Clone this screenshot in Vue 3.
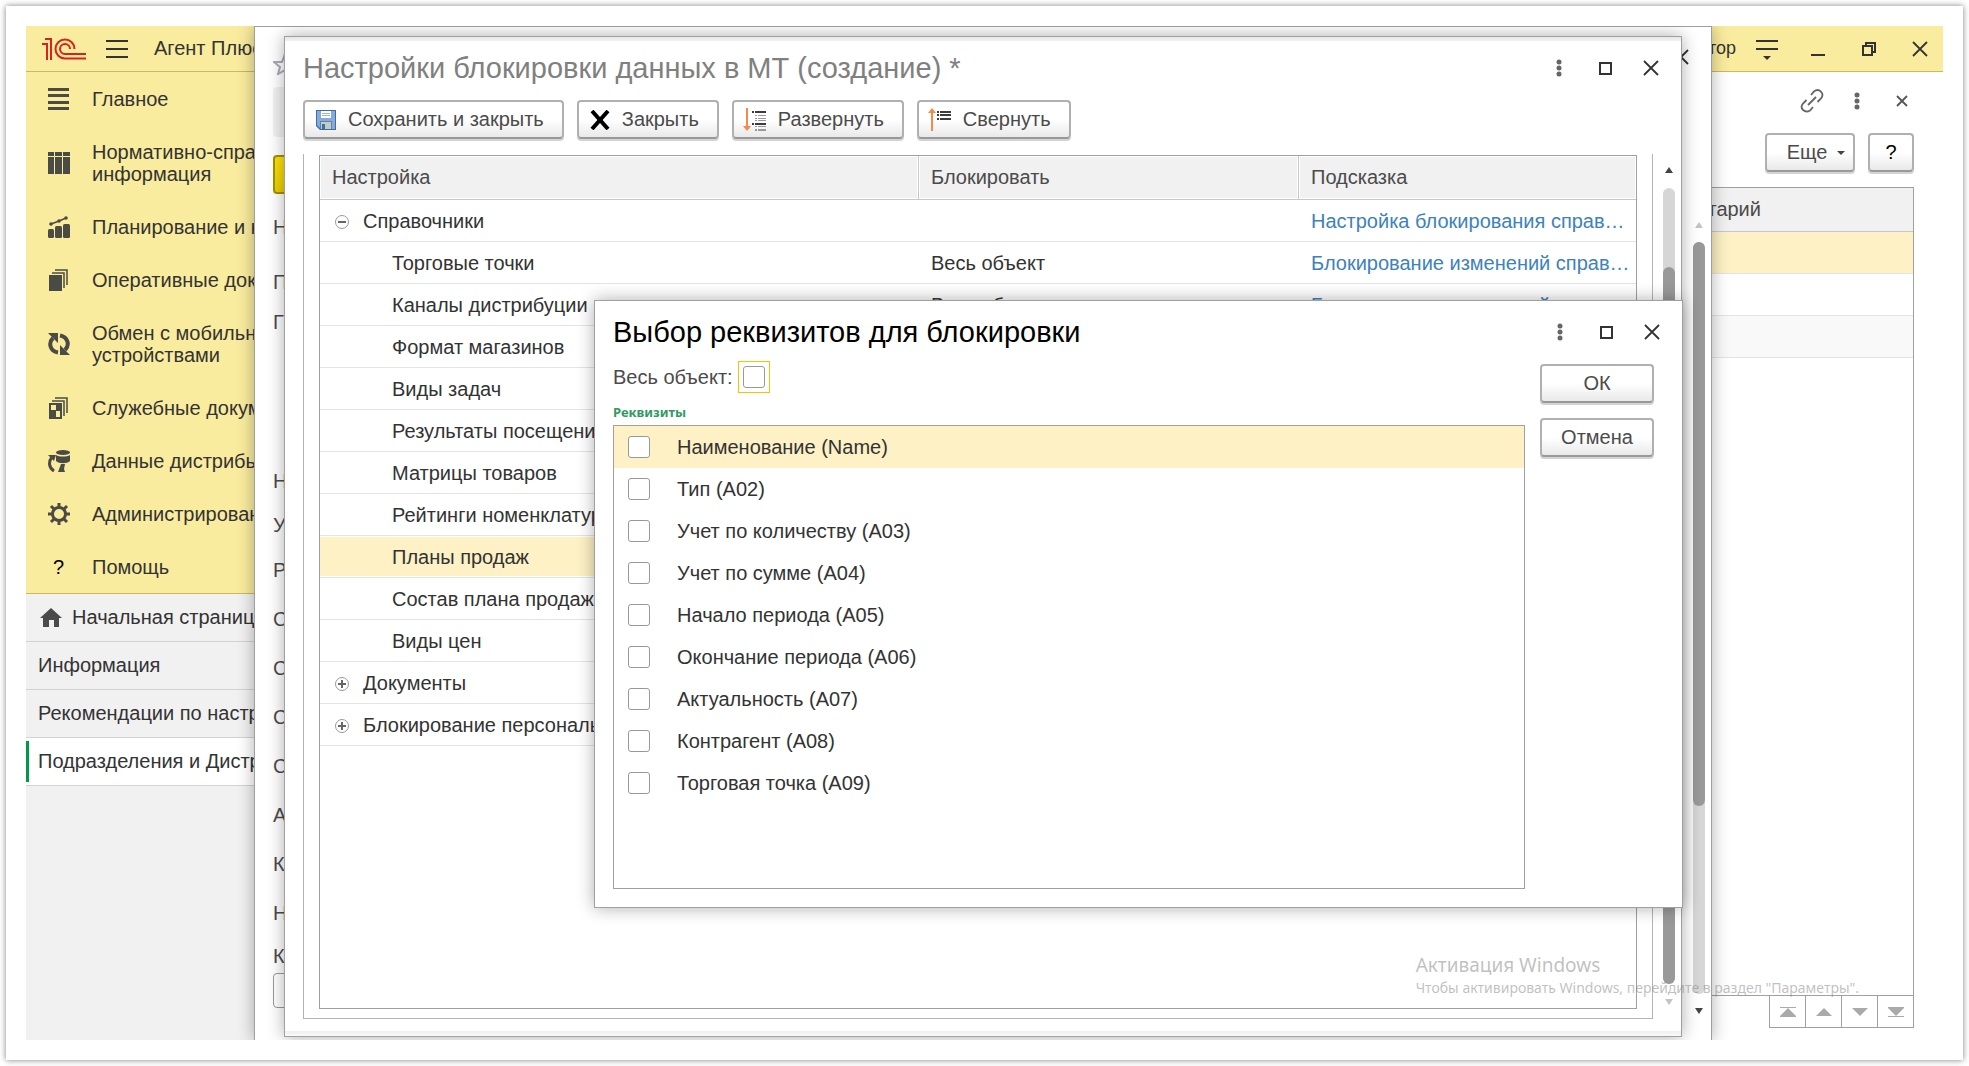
<script setup>
import { ref } from 'vue'

const sections = [
  { icon: 'lines', lines: ['Главное'] },
  { icon: 'columns', lines: ['Нормативно-справочная', 'информация'] },
  { icon: 'chart', lines: ['Планирование и контроль'] },
  { icon: 'docs', lines: ['Оперативные документы'] },
  { icon: 'sync', lines: ['Обмен с мобильными', 'устройствами'] },
  { icon: 'service', lines: ['Служебные документы'] },
  { icon: 'db', lines: ['Данные дистрибьюторов'] },
  { icon: 'gear', lines: ['Администрирование'] },
  { icon: 'help', lines: ['Помощь'] },
]

const openPages = [
  { text: 'Начальная страница', home: true },
  { text: 'Информация' },
  { text: 'Рекомендации по настройке' },
  { text: 'Подразделения и Дистрибьюторы', active: true },
]

const formLabels = ['Н', 'П', 'Г', 'Н', 'У', 'Р', 'С', 'С', 'С', 'С', 'А', 'К', 'Н', 'К']

const rows = [
  { name: 'Справочники', node: 'minus', hint: 'Настройка блокирования справ…' },
  { name: 'Торговые точки', lock: 'Весь объект', hint: 'Блокирование изменений справ…' },
  { name: 'Каналы дистрибуции', lock: 'Весь объект', hint: 'Блокирование изменений справ…' },
  { name: 'Формат магазинов' },
  { name: 'Виды задач' },
  { name: 'Результаты посещений' },
  { name: 'Матрицы товаров' },
  { name: 'Рейтинги номенклатуры' },
  { name: 'Планы продаж', selected: true },
  { name: 'Состав плана продаж' },
  { name: 'Виды цен' },
  { name: 'Документы', node: 'plus' },
  { name: 'Блокирование персональных данных', node: 'plus' },
]

const wholeObject = ref(false)
const attributes = ref([
  'Наименование (Name)',
  'Тип (A02)',
  'Учет по количеству (A03)',
  'Учет по сумме (A04)',
  'Начало периода (A05)',
  'Окончание периода (A06)',
  'Актуальность (A07)',
  'Контрагент (A08)',
  'Торговая точка (A09)',
].map((label) => ({ label, checked: false })))
</script>

<template>
  <div class="sheet">
    <div class="screen">
      <header class="topbar">
        <svg class="logo" width="44" height="24" viewBox="0 0 44 24" fill="none" stroke="#d9211e" stroke-width="2">
          <path d="M0 7h5v16M3 2h6v21" />
          <path d="M32.500 12a9.500 9.500 0 1 0 -9.500 9.500H44" />
          <path d="M28 12a5 5 0 1 0 -5 5H44" />
        </svg>
        <button class="bare" aria-label="Меню">
          <svg width="22" height="20" stroke="#333" stroke-width="2"><path d="M0 2h22M0 10h22M0 18h22" /></svg>
        </button>
        <span class="app-name">Агент Плюс</span>
        <span class="user">Администратор</span>
        <div class="controls">
          <button class="bare" aria-label="Сервис">
            <svg width="22" height="22" stroke="#333" stroke-width="2"><path d="M0 3h22M0 11h22" /><path d="M7 18h8l-4 4z" fill="#333" stroke="none" /></svg>
          </button>
          <button class="bare" aria-label="Свернуть окно">
            <svg width="14" height="22"><path d="M0 16h14v2H0z" fill="#333" /></svg>
          </button>
          <button class="bare" aria-label="Восстановить окно">
            <svg width="14" height="16" fill="none" stroke="#333" stroke-width="2"><path d="M1 5h9v9H1zM4 5V2h9v9h-3" /></svg>
          </button>
          <button class="bare" aria-label="Закрыть окно">
            <svg width="16" height="16" stroke="#333" stroke-width="1.800"><path d="M1 1l14 14M15 1L1 15" /></svg>
          </button>
        </div>
      </header>

      <div class="body">
        <aside class="sidebar">
          <nav class="sections">
            <a v-for="s in sections" :key="s.icon" href="#" class="section">
              <span class="section-icon">
                <svg v-if="s.icon === 'lines'" width="22" height="22" fill="#4b4b46"><path d="M0 0h21v3H0zM0 6h21v3H0zM0 13h21v3H0zM0 19h21v3H0z" /></svg>
                <svg v-else-if="s.icon === 'columns'" width="22" height="22" fill="#4b4b46"><path d="M0 0h6v4H0zM7 0h7v4H7zM15 0h7v4h-7zM0 5h6v17H0zM7 5h7v17H7zM15 5h7v17h-7z" /></svg>
                <svg v-else-if="s.icon === 'chart'" width="22" height="22" fill="#4b4b46"><rect y="13" width="6" height="9" rx="1.500" /><rect x="7" y="10" width="7" height="12" rx="1.500" /><rect x="15" y="8" width="7" height="14" rx="1.500" /><path d="M3 8l8-3 7-3" stroke="#4b4b46" stroke-width="1.500" fill="none" /><circle cx="3" cy="8" r="1.800" /><circle cx="11" cy="5" r="1.800" /><circle cx="18" cy="2" r="1.800" /></svg>
                <svg v-else-if="s.icon === 'docs'" width="22" height="22" fill="#4b4b46"><path d="M1 6h13v16H1z" /><path d="M4 4h12v15M7 1h12v15" fill="none" stroke="#4b4b46" stroke-width="1.500" /></svg>
                <svg v-else-if="s.icon === 'sync'" width="22" height="22" fill="none" stroke="#4b4b46" stroke-width="4"><path d="M10 19.500C2 18 0 10 5 5M12 2.500c8 1.500 10 9.500 5 14.500" /><path d="M0 0h10v10zM22 22H12V12z" fill="#4b4b46" stroke="none" /></svg>
                <svg v-else-if="s.icon === 'service'" width="22" height="22" fill="#4b4b46"><path d="M1 6h13v16H1zM3 8v5h5V8zM8 14v6h4v-6z" fill-rule="evenodd" /><path d="M4 4h12v15M7 1h12v15" fill="none" stroke="#4b4b46" stroke-width="1.500" /></svg>
                <svg v-else-if="s.icon === 'db'" width="24" height="22" fill="#4b4b46"><ellipse cx="15" cy="2.500" rx="7" ry="2.500" /><path d="M8 5c3 2 11 2 14 0v6c-3 3-11 3-14 0z" /><path d="M4 7C0 12 1 18 6 21" fill="none" stroke="#4b4b46" stroke-width="3" /><path d="M0 5h8l-2 6zM13 14h4l-1 5 1 3h-7z" /></svg>
                <svg v-else-if="s.icon === 'gear'" width="22" height="22" fill="none" stroke="#4b4b46"><circle cx="11" cy="11" r="6.500" stroke-width="3" /><path d="M11 0v4M11 18v4M0 11h4M18 11h4M3 3l3 3M16 16l3 3M19 3l-3 3M6 16l-3 3" stroke-width="3" /></svg>
                <b v-else class="question">?</b>
              </span>
              <span><template v-for="(l, i) in s.lines" :key="l"><br v-if="i">{{ l }}</template></span>
            </a>
          </nav>
          <nav class="pages">
            <a v-for="p in openPages" :key="p.text" href="#" class="page-link" :class="{ active: p.active, home: p.home }">
              <svg v-if="p.home" width="22" height="19" fill="#4b4b4b"><path d="M11 0l11 10h-3v9h-5v-7H9v7H3v-9H0z" /></svg>
              {{ p.text }}
            </a>
          </nav>
        </aside>

        <main class="workspace">
          <div class="page-tools">
            <button class="bare" aria-label="Ссылка">
              <svg width="24" height="24" viewBox="0 0 24 24" fill="none" stroke="#666" stroke-width="1.800"><path d="M11 6l3-3.500c5-4 11 2 7 7l-3.500 3.500M13 18l-3 3.500c-5 3-11-2-7-7L6.500 11M8 16l8-8" /></svg>
            </button>
            <button class="bare" aria-label="Действия"><svg width="6" height="18" fill="#666"><circle cx="3" cy="3" r="2.500" /><circle cx="3" cy="9" r="2.500" /><circle cx="3" cy="15" r="2.500" /></svg></button>
            <button class="bare" aria-label="Закрыть страницу"><svg width="12" height="12" stroke="#555" stroke-width="1.800"><path d="M1 1l10 10M11 1L1 11" /></svg></button>
          </div>
          <div class="page-commands">
            <button class="btn more">Еще <svg width="8" height="4" fill="#444"><path d="M0 0h8L4 4z" /></svg></button>
            <button class="btn ask">?</button>
          </div>
          <table class="journal">
            <thead><tr><th>Комментарий</th></tr></thead>
            <tbody>
              <tr class="current"><td></td></tr>
              <tr><td></td></tr>
              <tr class="even"><td></td></tr>
              <tr class="rest"><td></td></tr>
            </tbody>
          </table>
          <div class="pager">
            <button aria-label="В начало"><svg width="16" height="10" fill="#aaa"><path d="M0 0h16v1H0zM8 1l8 8v1H0V9z" /></svg></button>
            <button aria-label="Вверх"><svg width="16" height="10" fill="#aaa"><path d="M8 1l8 8H0z" /></svg></button>
            <button aria-label="Вниз"><svg width="16" height="10" fill="#aaa"><path d="M0 1h16L8 9z" /></svg></button>
            <button aria-label="В конец"><svg width="16" height="10" fill="#aaa"><path d="M0 0h16v1L8 9 0 1zM0 9h16v1H0z" /></svg></button>
          </div>
        </main>
      </div>

      <section class="window card-window">
        <div class="card-form">
          <svg class="star" width="24" height="22" fill="none" stroke="#aab" stroke-width="2"><path d="M12 1l3 8h8l-6 5 2 7-7-4-7 4 2-7-6-5h8z" /></svg>
          <div class="tab"></div>
          <button class="yellow" aria-label="Записать"></button>
          <div class="labels"><span v-for="(l, i) in formLabels" :key="i">{{ l }}</span></div>
          <input class="field" type="text" aria-label="Комментарий">
        </div>
        <div class="card-side">
          <button class="bare" aria-label="Закрыть карточку"><svg width="16" height="16" stroke="#333" stroke-width="1.800"><path d="M1 1l14 14M15 1L1 15" /></svg></button>
          <div class="scroll">
            <svg width="8" height="6" fill="#c4c4c4"><path d="M4 0l4 6H0z" /></svg>
            <div class="track"><div class="thumb"></div></div>
            <svg width="8" height="6" fill="#444"><path d="M0 0h8L4 6z" /></svg>
          </div>
        </div>
      </section>

      <section class="window settings">
        <div class="window-head">
          <h1>Настройки блокировки данных в МТ (создание) *</h1>
          <div class="window-icons">
            <button class="bare" aria-label="Действия"><svg width="6" height="18" fill="#666"><circle cx="3" cy="3" r="2.500" /><circle cx="3" cy="9" r="2.500" /><circle cx="3" cy="15" r="2.500" /></svg></button>
            <button class="bare" aria-label="Развернуть окно"><svg width="13" height="13" fill="none" stroke="#333" stroke-width="2"><path d="M1 1h11v11H1z" /></svg></button>
            <button class="bare" aria-label="Закрыть окно"><svg width="16" height="16" stroke="#333" stroke-width="1.800"><path d="M1 1l14 14M15 1L1 15" /></svg></button>
          </div>
        </div>
        <div class="commands">
          <button class="btn">
            <svg width="20" height="20"><path d="M0 0h20v20H4l-4-4z" fill="#3f6da3" /><path d="M1 1h18v18H5l-4-4z" fill="#86abda" /><path d="M5 1h10v7H5z" fill="#fff" /><path d="M6 3h8v1H6zM6 5h8v1H6z" fill="#9bb6d8" /><path d="M4 11h12v8H4z" fill="#5d86a6" /><path d="M5 12h10v7H5z" fill="#c5cbc4" /><path d="M6 14h3v5H6z" fill="#3a6fa8" /></svg>
            Сохранить и закрыть
          </button>
          <button class="btn">
            <svg width="20" height="20" stroke="#000" stroke-width="4"><path d="M2 1l16 18M18 1L2 19" /></svg>
            Закрыть
          </button>
          <button class="btn tree">
            <svg width="23" height="23"><path d="M3 0h2v18h3l-4 5-4-5h3z" fill="#f58a4b" /><path d="M9 3h2v2H9zM12 3h11v2H12zM9 15h2v2H9zM12 15h11v2H12z" fill="#3c3c3c" /><path d="M12 7h2v1h-2zM15 7h8v1h-8zM12 10h2v1h-2zM15 10h8v1h-8zM12 12h2v1h-2zM15 12h8v1h-8zM12 18h2v1h-2zM15 18h8v1h-8zM12 21h2v2h-2zM15 21h8v2h-8z" fill="#999" /></svg>
            Развернуть
          </button>
          <button class="btn tree">
            <svg width="23" height="23"><path d="M3 23h2V5h3L4 0 0 5h3z" fill="#f58a4b" /><path d="M9 3h2v2H9zM12 3h11v2H12zM9 6h2v2H9zM12 6h11v2H12zM9 10h2v2H9zM12 10h11v2H12z" fill="#3c3c3c" /></svg>
            Свернуть
          </button>
        </div>
        <div class="settings-body">
          <div class="group">
            <div class="table-box">
              <table class="settings-table">
                <colgroup><col class="c-name"><col class="c-lock"><col></colgroup>
                <thead><tr><th>Настройка</th><th>Блокировать</th><th>Подсказка</th></tr></thead>
                <tbody>
                  <tr v-for="r in rows" :key="r.name" :class="{ selected: r.selected }">
                    <td>
                      <div class="name" :class="{ child: !r.node }">
                        <svg v-if="r.node" width="14" height="14" fill="none"><circle cx="7" cy="7" r="6.500" stroke="#999" /><path :d="r.node === 'plus' ? 'M3 7h8M7 3v8' : 'M3 7h8'" stroke="#666" stroke-width="2" /></svg>
                        {{ r.name }}
                      </div>
                    </td>
                    <td>{{ r.lock }}</td>
                    <td><a v-if="r.hint" href="#">{{ r.hint }}</a></td>
                  </tr>
                </tbody>
              </table>
            </div>
          </div>
          <div class="scroll">
            <svg width="8" height="6" fill="#444"><path d="M4 0l4 6H0z" /></svg>
            <div class="track"><div class="thumb"></div></div>
            <svg width="8" height="6" fill="#c4c4c4"><path d="M0 0h8L4 6z" /></svg>
          </div>
        </div>
      </section>

      <section class="window chooser">
        <div class="window-head">
          <h1>Выбор реквизитов для блокировки</h1>
          <div class="window-icons">
            <button class="bare" aria-label="Действия"><svg width="6" height="18" fill="#666"><circle cx="3" cy="3" r="2.500" /><circle cx="3" cy="9" r="2.500" /><circle cx="3" cy="15" r="2.500" /></svg></button>
            <button class="bare" aria-label="Развернуть окно"><svg width="13" height="13" fill="none" stroke="#333" stroke-width="2"><path d="M1 1h11v11H1z" /></svg></button>
            <button class="bare" aria-label="Закрыть окно"><svg width="16" height="16" stroke="#333" stroke-width="1.800"><path d="M1 1l14 14M15 1L1 15" /></svg></button>
          </div>
        </div>
        <div class="chooser-body">
          <div class="fields">
            <div class="whole">
              <label for="whole-object">Весь объект:</label>
              <span class="focus"><input id="whole-object" v-model="wholeObject" type="checkbox"></span>
            </div>
            <h2>Реквизиты</h2>
            <div class="list">
              <label v-for="(a, i) in attributes" :key="a.label" class="item" :class="{ selected: i === 0 }">
                <input v-model="a.checked" type="checkbox">{{ a.label }}
              </label>
            </div>
          </div>
          <div class="answers">
            <button class="btn">ОК</button>
            <button class="btn">Отмена</button>
          </div>
        </div>
      </section>

      <div class="watermark">
        <p class="wm-title">Активация Windows</p>
        <p>Чтобы активировать Windows, перейдите в раздел "Параметры".</p>
      </div>
    </div>
  </div>
</template>

<style>
html { background: #fff; }
</style>

<style scoped>
* { box-sizing: border-box; }
.sheet {
  display: flex;
  min-height: calc(100vh - 12px);
  margin: 6px;
  padding: 20px;
  background: #fff;
  box-shadow: 0 0 6px rgba(0, 0, 0, 0.5);
  font: 20px/23px "Liberation Sans", Arial, sans-serif;
  color: #333;
}
.screen {
  position: relative;
  display: flex;
  flex: 1;
  flex-direction: column;
  min-width: 0;
  overflow: hidden;
}
a { color: inherit; text-decoration: none; }
svg { display: block; flex: none; }
h1, h2, p { margin: 0; font-weight: normal; }
button, input { font: inherit; }
.bare { padding: 0; border: 0; background: none; }

.topbar {
  display: flex;
  align-items: center;
  height: 46px;
  padding: 0 11px 0 16px;
  background: #faec9e;
  border-bottom: 1px solid #c9b95f;
}
.topbar .logo { margin-right: 20px; }
.app-name { margin-left: 26px; }
.user { margin-left: auto; margin-right: 19px; font-size: 18px; }
.controls { display: flex; align-items: center; gap: 27px; }
.controls .bare, .page-tools .bare, .window-icons .bare {
  display: flex;
  justify-content: center;
  width: 24px;
}

.body { display: flex; flex: 1; }
.sidebar { width: 228px; overflow: hidden; background: #f1f1f1; white-space: nowrap; }
.sections { background: #faec9e; border-bottom: 1px solid #c9b95f; }
.section { display: flex; align-items: center; padding: 16px 0 15px 22px; line-height: 22px; }
.section-icon { display: flex; flex: none; width: 44px; }
.question { padding-left: 5px; font-weight: normal; color: #000; }
.page-link {
  display: flex;
  align-items: center;
  height: 48px;
  padding-left: 12px;
  border-bottom: 1px solid #d2d2d2;
}
.page-link.home { gap: 10px; padding-left: 14px; }
.page-link.active {
  background: linear-gradient(#00994a, #00994a) 0 3px / 3px 41px no-repeat #fff;
}

.workspace {
  display: flex;
  flex: 1;
  flex-direction: column;
  align-items: flex-end;
  padding: 17px 29px 12px 0;
}
.page-tools { display: flex; align-items: center; gap: 21px; height: 24px; }
.page-commands { display: flex; gap: 13px; margin: 20px 0 15px; }
.btn {
  display: flex;
  align-items: center;
  justify-content: center;
  gap: 12px;
  height: 39px;
  padding: 0 18px 0 11px;
  border: 2px solid #b0b0b0;
  border-bottom-color: #999;
  border-radius: 4px;
  background: linear-gradient(#fff 50%, #e9e9e9);
  box-shadow: 0 2px 0 #d4d4d4;
  color: #4b4b4b;
  white-space: nowrap;
}
.more { gap: 10px; width: 90px; padding: 0 8px 0 20px; }
.ask { width: 46px; padding: 0; color: #000; }

table { border-collapse: separate; border-spacing: 0; table-layout: fixed; }
th { font-weight: normal; text-align: left; color: #4b4b4b; background: #f1f1f1; }
.journal { flex: 1; width: 282px; border: 1px solid #a0a0a0; }
.journal th { height: 44px; padding: 0 0 0 2px; border-bottom: 1px solid #c8c8c8; }
.journal td { height: 42px; padding: 0; border-bottom: 1px solid #e4e4e4; }
.journal .current td { background: #fdf1c5; }
.journal .even td { background: #f9f9f9; }
.journal .rest td { height: auto; border: 0; }
.pager { display: flex; border-left: 1px solid #a0a0a0; }
.pager button {
  display: flex;
  align-items: center;
  justify-content: center;
  width: 36px;
  height: 32px;
  padding: 0;
  border: solid #a0a0a0;
  border-width: 0 1px 1px 0;
  background: #fff;
}

.window {
  position: absolute;
  background: #fff;
  border: 1px solid #a0a0a0;
  box-shadow: 0 0 16px rgba(0, 0, 0, 0.32);
}
.card-window {
  top: 0;
  right: 231px;
  bottom: -1px;
  left: 228px;
  display: flex;
  justify-content: space-between;
}
.card-form { width: 29px; overflow: hidden; padding: 26px 0 0 18px; color: #4b4b4b; }
.tab { height: 50px; margin-top: 12px; border-radius: 4px 0 0 4px; background: #f1f1f1; }
.yellow {
  display: block;
  width: 160px;
  height: 39px;
  margin-top: 18px;
  border: 2px solid #a39000;
  border-radius: 4px;
  background: linear-gradient(#ffe30a, #eccf00);
}
.labels {
  display: grid;
  grid-template-rows: 55px 40px 159px 44px 45px 49px 49px 49px 49px 49px 49px 49px 43px 28px;
  margin-top: 22px;
}
.field { width: 160px; height: 35px; border: 1px solid #999; border-radius: 4px; }
.card-side { display: flex; flex-direction: column; align-items: flex-end; padding: 22px 6px 26px 0; }
.card-side > .bare { margin-right: 16px; }

.scroll { display: flex; flex-direction: column; align-items: center; width: 12px; }
.track { flex: 1; width: 12px; border-radius: 6px; background: #d6d6d6; }
.thumb { border-radius: 6px; background: #999; }
.card-side .scroll { flex: 1; gap: 14px; margin-top: 157px; }
.card-side .thumb { height: 75%; }

.settings {
  top: 10px;
  right: 261px;
  bottom: 3px;
  left: 258px;
  display: flex;
  flex-direction: column;
  padding: 13px 6px 17px 18px;
  background: linear-gradient(#e6e6e6, #f2f2f2) top / 100% 4px no-repeat,
    linear-gradient(#eee, #fafafa) bottom / 100% 5px no-repeat, #fff;
}
.window-head { display: flex; align-items: center; justify-content: space-between; height: 36px; }
.window-head h1 { font-size: 29px; line-height: 36px; white-space: nowrap; }
.settings h1 { color: #808080; }
.window-icons { display: flex; align-items: center; gap: 22px; padding-right: 12px; }
.commands { display: flex; gap: 13px; margin-top: 14px; }
.tree { padding-left: 9px; }
.settings-body { display: flex; flex: 1; justify-content: space-between; margin-top: 15px; min-height: 0; }
.group {
  display: flex;
  flex: 1;
  margin-right: 10px;
  padding: 1px 15px 9px;
  border: solid #b4b4b4;
  border-width: 0 1px 1px;
}
.table-box { flex: 1; border: 1px solid #a0a0a0; overflow: hidden; }
.settings-table { width: 100%; }
.c-name { width: 599px; }
.c-lock { width: 380px; }
.settings-table th {
  height: 44px;
  padding: 0 12px;
  border-right: 1px solid #c8c8c8;
  border-bottom: 1px solid #c8c8c8;
  box-shadow: inset 0 0 0 1px #fff;
}
.settings-table th:last-child { border-right: 0; }
.settings-table td { height: 42px; padding: 2px 12px 0; border-bottom: 1px solid #e4e4e4; white-space: nowrap; }
.settings-table .selected td { background: #fdf1c5; box-shadow: inset 0 1px #fff, inset 0 -1px #fff; }
.settings-table a { color: #3d82bd; }
.name { display: flex; align-items: center; gap: 14px; padding-left: 3px; }
.name.child { padding-left: 60px; }
.settings .scroll { gap: 15px; padding: 13px 0 14px; }
.settings .track { display: flex; flex-direction: column; }
.settings .thumb { flex: 1; width: 12px; margin-top: 79px; }

.chooser {
  top: 274px;
  right: 260px;
  left: 568px;
  padding: 13px 28px 18px 18px;
}
.chooser h1 { color: #000; }
.chooser .window-icons { padding-right: 0; margin-right: -10px; }
.chooser-body { display: flex; gap: 15px; margin-top: 11px; }
.fields { flex: 1; }
.whole { display: flex; align-items: center; gap: 5px; color: #4b4b4b; }
.focus { display: flex; padding: 4px; border: 1px solid #f5c400; }
input[type="checkbox"] {
  flex: none;
  width: 22px;
  height: 22px;
  margin: 0;
  border: 1px solid #999;
  border-radius: 3px;
  background: #fff;
  appearance: none;
}
.chooser h2 { margin: 11px 0 5px; font: bold 13px/16px "Noto Sans", sans-serif; color: #2f9a62; }
.list { min-height: 464px; border: 1px solid #a0a0a0; }
.item { display: flex; align-items: center; gap: 27px; height: 42px; padding-left: 14px; }
.item.selected { background: #fdf1c5; }
.answers { display: flex; flex-direction: column; gap: 15px; width: 114px; padding-top: 3px; }
.answers .btn { padding: 0; }

.watermark {
  position: absolute;
  right: 84px;
  bottom: 42px;
  font: 14px/20px "Noto Sans", sans-serif;
  color: rgba(130, 130, 130, 0.5);
  white-space: nowrap;
  pointer-events: none;
}
.wm-title { font-size: 19px; line-height: 26px; }
</style>
